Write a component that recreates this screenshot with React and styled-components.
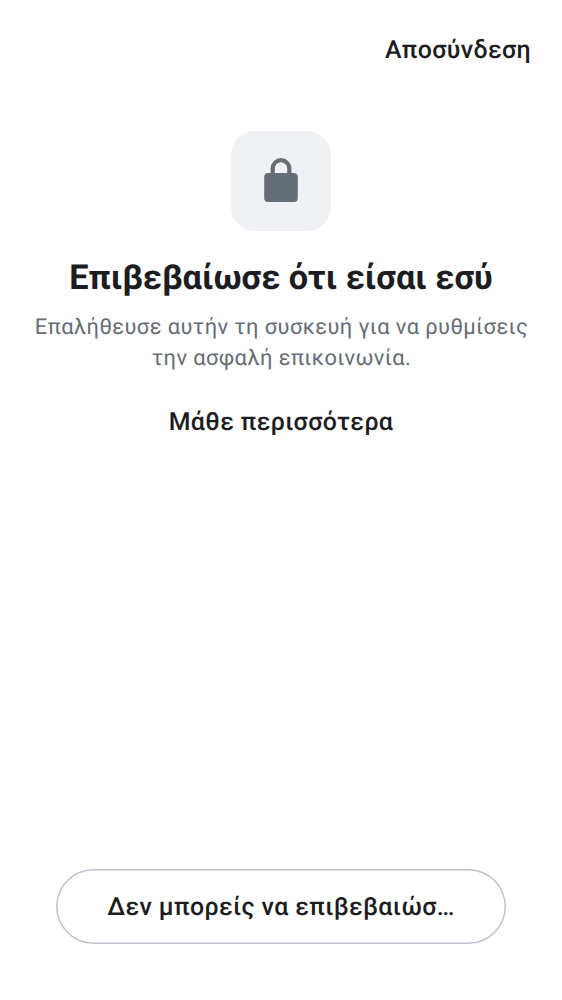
import React from "react";
import styled, { createGlobalStyle } from "styled-components";

const GlobalStyle = createGlobalStyle`
  * { box-sizing: border-box; }
  body { margin: 0; background: #fff; font-family: Roboto, "Noto Sans", sans-serif; color: #1b1d22; text-rendering: geometricPrecision; }
`;
const Screen = styled.div`
  height: 1000px;
  display: flex;
  flex-direction: column;
`;
const TopBar = styled.header`
  height: 100px;
  display: flex;
  justify-content: flex-end;
  align-items: center;
  padding-right: 31px;
`;
const TextButton = styled.button`
  border: 0;
  padding: 2px 0 0;
  background: none;
  color: inherit;
  font: 500 24.9px/36px Roboto, sans-serif;
  letter-spacing: 0.39px;
  text-rendering: inherit;
  white-space: nowrap;
`;
const Content = styled.main`
  flex: 1;
  display: flex;
  flex-direction: column;
  align-items: center;
  padding-top: 31px;
`;
const IconTile = styled.div`
  width: 100px;
  height: 100px;
  border-radius: 24px;
  background: #f0f1f5;
  display: flex;
  align-items: center;
  justify-content: center;
`;
const Title = styled.h1`
  margin: 25px 0 0;
  font-size: 34.3px;
  line-height: 44px;
  font-weight: 700;
  white-space: nowrap;
`;
const Description = styled.p`
  margin: 12px 0 29px;
  padding-left: 1px;
  color: #656d77;
  font-size: 21.9px;
  line-height: 31px;
  letter-spacing: 0.4px;
  text-align: center;
  white-space: nowrap;
`;
const Footer = styled.footer`
  padding: 0 56px 56px;
`;
const OutlinedButton = styled(TextButton)`
  display: block;
  width: 100%;
  height: 75px;
  border-radius: 38px;
  box-shadow: inset 0 0 0 1.5px #bdc3cc;
`;

export default function App() {
  return (
    <Screen>
      <GlobalStyle />
      <TopBar><TextButton>Αποσύνδεση</TextButton></TopBar>
      <Content>
        <IconTile>
          <svg width="34" height="46" viewBox="0 0 34 46" fill="none" aria-hidden="true">
            <rect x="0.2" y="15" width="33.6" height="29" rx="4" fill="#656d77" />
            <path d="M8.7 17V10.5a8.3 8.3 0 0 1 16.6 0V17" stroke="#656d77" strokeWidth="4.2" />
          </svg>
        </IconTile>
        <Title>Επιβεβαίωσε ότι είσαι εσύ</Title>
        <Description>Επαλήθευσε αυτήν τη συσκευή για να ρυθμίσεις<br />την ασφαλή επικοινωνία.</Description>
        <TextButton>Μάθε περισσότερα</TextButton>
      </Content>
      <Footer><OutlinedButton>Δεν μπορείς να επιβεβαιώσ…</OutlinedButton></Footer>
    </Screen>
  );
}
